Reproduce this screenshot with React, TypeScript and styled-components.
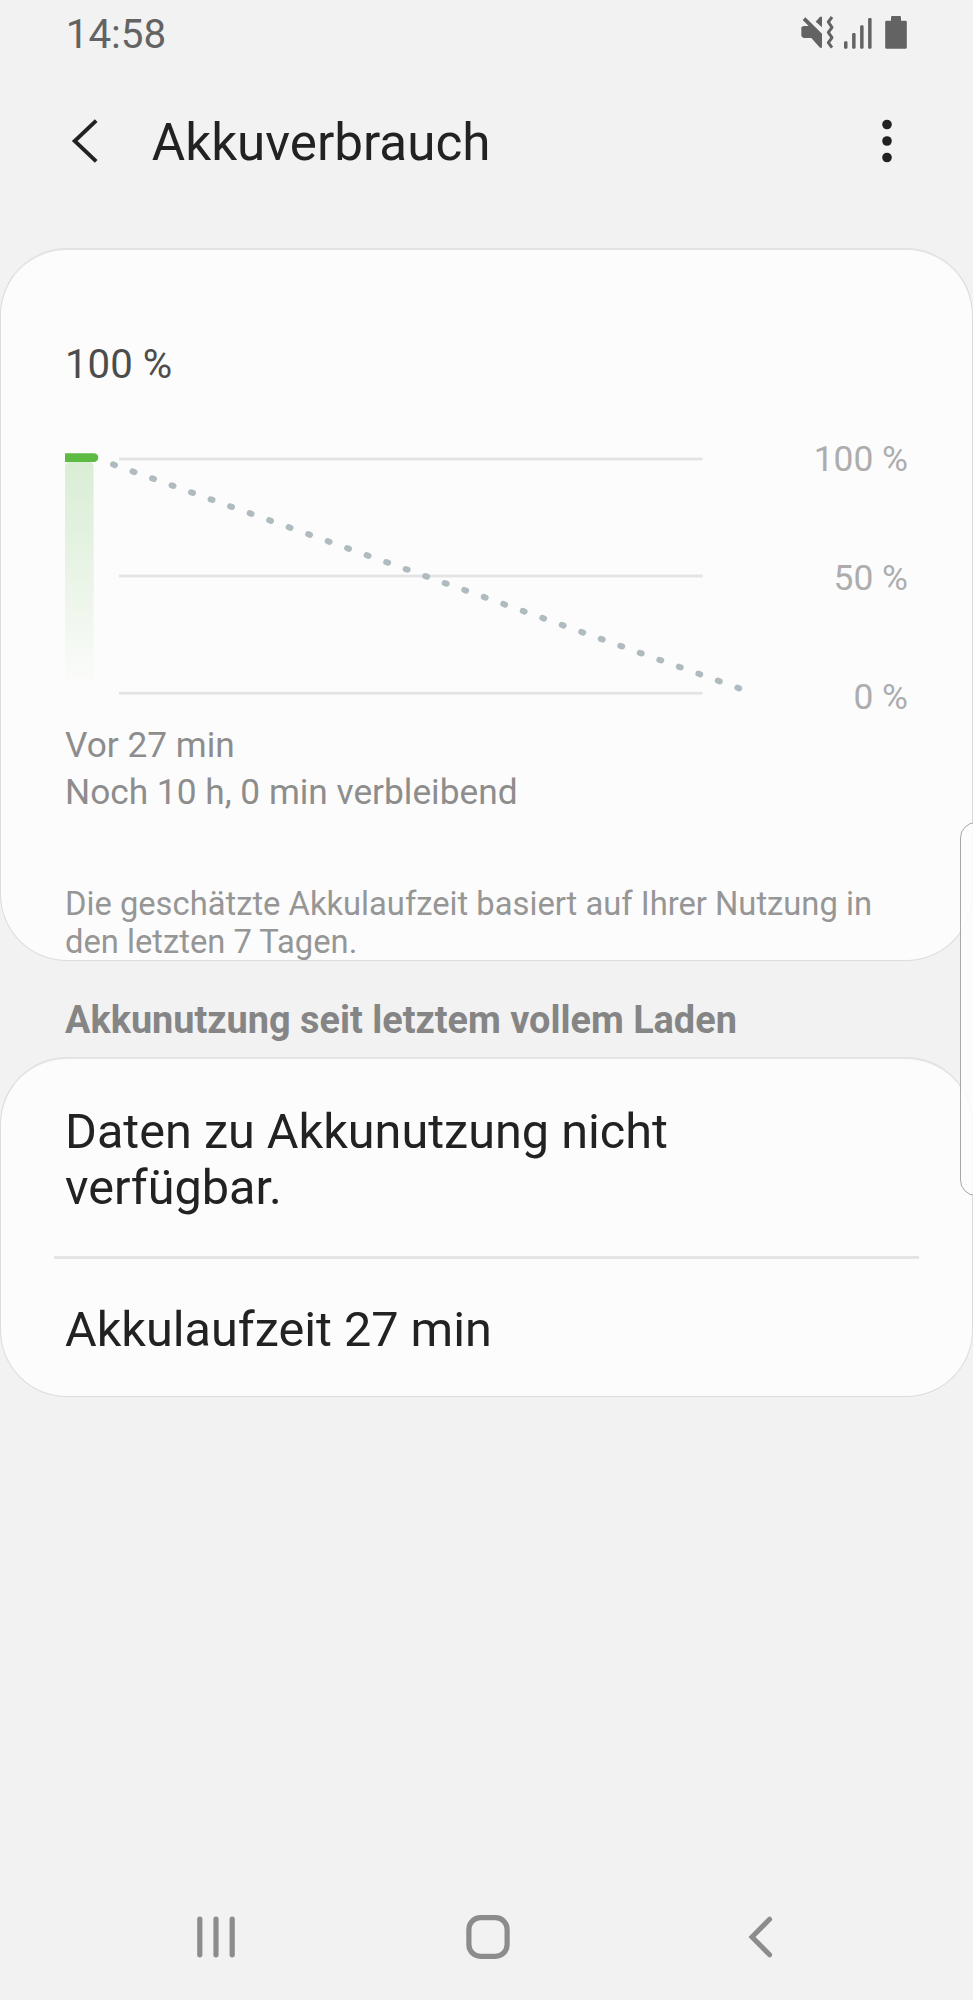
import React from "react";
import styled, { createGlobalStyle } from "styled-components";

const GlobalStyle = createGlobalStyle`
  *, *::before, *::after { box-sizing: border-box; }
  html, body { margin: 0; padding: 0; background: #f2f2f2; }
  body { overflow: hidden; }
  svg { display: block; flex: none; }
`;

const Screen = styled.div`
  position: relative;
  display: flex;
  flex-direction: column;
  width: 973px;
  height: 2000px;
  overflow: hidden;
  background: #f2f2f2;
  color: #222;
  font-family: Roboto, "Liberation Sans", sans-serif;
`;

const StatusBar = styled.div`
  display: flex;
  justify-content: space-between;
  height: 68px;
  padding: 0 65.7px;
  color: #636363;
`;

const Clock = styled.span`
  font-size: 40.4px;
  line-height: 69px;
`;

const StatusIcons = styled.div`
  display: flex;
  padding-top: 16px;
`;

const SignalSlot = styled.div`
  margin: 0 13.4px 0 10.3px;
`;

const TopBar = styled.header`
  display: flex;
  align-items: center;
  height: 149px;
  margin-bottom: 31px;
  padding: 0 80.5px 0 70px;
`;

const IconButton = styled.button`
  display: flex;
  padding: 0;
  border: 0;
  background: none;
  color: inherit;
`;

const BackButton = styled(IconButton)`
  margin-bottom: 4px;
`;

const MenuButton = styled(IconButton)`
  margin: 0 0 4px auto;
`;

const Title = styled.h1`
  margin: 0 0 0 51.8px;
  font-size: 51.2px;
  font-weight: 400;
  line-height: 60px;
`;

const Card = styled.section<{ $height: number }>`
  flex: none;
  height: ${(p) => p.$height}px;
  border: 1px solid #dcdcdc;
  border-top: 2px solid #e3e3e3;
  border-radius: 67px;
  background: #fcfcfc;
`;

const ChartCard = styled(Card)`
  padding: 90px 64px 0;
`;

const Level = styled.div`
  color: #4c4c4c;
  font-size: 40.2px;
  line-height: 50px;
`;

const ChartRow = styled.div`
  display: flex;
  justify-content: space-between;
  height: 280px;
  margin-top: 48px;
`;

const AxisLabels = styled.div`
  display: flex;
  flex-direction: column;
  justify-content: space-between;
  align-items: flex-end;
  color: #adadad;
  font-size: 35.4px;
  line-height: 42px;
`;

const Estimate = styled.div`
  margin-top: 3.5px;
  color: #8d8d8d;
  font-size: 35.25px;
  line-height: 47.5px;
`;

const Note = styled.p`
  margin: 68px 0 0;
  color: #969696;
  font-size: 32.72px;
  line-height: 38px;
  white-space: nowrap;
`;

const SectionTitle = styled.h2`
  flex: none;
  height: 96px;
  margin: 0;
  padding: 37px 65px 0;
  color: #858585;
  font-size: 37.86px;
  font-weight: 700;
  line-height: 44px;
`;

const UsageCard = styled(Card)`
  padding: 44.5px 53px 0;
`;

const UsageRow = styled.div`
  padding: 0 11px;
  font-size: 48.6px;
  line-height: 56.5px;
`;

const Divider = styled.div`
  height: 3px;
  margin: 39.5px 0 42.5px;
  background: #e4e4e4;
`;

const NavBar = styled.nav`
  display: grid;
  grid-template-columns: repeat(3, 272px);
  justify-content: center;
  align-items: center;
  justify-items: center;
  height: 126px;
  margin-top: auto;
  padding-left: 3px;
  color: #8c8c8c;
`;

const EdgeHandle = styled.div`
  position: absolute;
  top: 822px;
  right: -19px;
  width: 32px;
  height: 374px;
  border: 1.5px solid #a8a8a8;
  border-radius: 16px;
  background: rgba(253, 253, 253, 0.88);
`;

const MutedVibrateIcon = () => (
  <svg width="33" height="33" viewBox="64 48 99 99">
    <path
      fill="currentColor"
      d="M74 78H87L69 60L77 52L127 101V143H121L95 114H71L65 108V84Q65 78 74 78ZM108 65L121 50H127V82Z"
    />
    <path
      d="M157 51L146 66L157 82L146 97L157 113L146 128L157 143"
      fill="none"
      stroke="currentColor"
      strokeWidth="9"
      strokeLinejoin="round"
    />
  </svg>
);

const SignalIcon = () => (
  <svg width="28" height="33" viewBox="0 0 28 33" fill="currentColor">
    <rect x="0" y="25.3" width="3.5" height="7.5" rx="1.2" />
    <rect x="8.1" y="17" width="3.5" height="15.8" rx="1.2" />
    <rect x="16.1" y="9.2" width="3.5" height="23.6" rx="1.2" />
    <rect x="24.1" y="2" width="3.5" height="30.8" rx="1.2" />
  </svg>
);

const BatteryIcon = () => (
  <svg width="22" height="33" viewBox="0 0 22 33" fill="currentColor">
    <rect x="0.2" y="4.8" width="21.6" height="28" rx="1.4" />
    <rect x="6" y="0" width="10" height="8" rx="1.2" />
  </svg>
);

const BackIcon = () => (
  <svg width="30" height="46" viewBox="0 0 30 46">
    <path d="M26.2 2.6L4.7 23L26.2 43.4" fill="none" stroke="currentColor" strokeWidth="3.9" />
  </svg>
);

const MoreIcon = () => (
  <svg width="12" height="46" viewBox="0 0 12 46" fill="currentColor">
    <circle cx="6" cy="6.5" r="4.8" />
    <circle cx="6" cy="23" r="4.8" />
    <circle cx="6" cy="39.5" r="4.8" />
  </svg>
);

const RecentsIcon = () => (
  <svg width="40" height="44" viewBox="0 0 40 44" stroke="currentColor" strokeWidth="5.2" strokeLinecap="round">
    <path d="M3.8 4.2V39.8M20 4.2V39.8M36.2 4.2V39.8" />
  </svg>
);

const HomeIcon = () => (
  <svg width="44" height="44" viewBox="0 0 44 44">
    <rect x="2.9" y="2.7" width="38.2" height="38.6" rx="11.5" fill="none" stroke="currentColor" strokeWidth="5.2" />
  </svg>
);

const NavBackIcon = () => (
  <svg width="26" height="44" viewBox="0 0 26 44">
    <path
      d="M22.6 4.2L5 22L22.6 39.8"
      fill="none"
      stroke="currentColor"
      strokeWidth="5"
      strokeLinecap="round"
    />
  </svg>
);

const BatteryChart = () => (
  <svg width="690" height="280" viewBox="0 0 690 280">
    <defs>
      <linearGradient id="charge" x1="0" y1="0" x2="0" y2="1">
        <stop offset="0" stopColor="#5dbb46" stopOpacity="0.22" />
        <stop offset="0.5" stopColor="#5dbb46" stopOpacity="0.12" />
        <stop offset="1" stopColor="#5dbb46" stopOpacity="0.01" />
      </linearGradient>
    </defs>
    <g fill="#e3e3e3">
      <rect x="54" y="19.6" width="583.6" height="2.8" />
      <rect x="54" y="136.6" width="583.6" height="2.8" />
      <rect x="54" y="253.8" width="583.6" height="2.8" />
    </g>
    <path d="M0 30Q0 24 4 24H25Q28.6 24 28.6 30V243H0Z" fill="url(#charge)" />
    <path d="M0 15.3H29A4.3 4.3 0 0 1 29 23.9H0Z" fill="#5dbb43" />
    <path
      d="M48.1 26.4L675.5 250.8"
      fill="none"
      stroke="#b0bbc0"
      strokeWidth="6.1"
      strokeLinecap="round"
      strokeDasharray="1.9 18.82"
    />
  </svg>
);

export default function App() {
  return (
    <Screen>
      <GlobalStyle />
      <StatusBar>
        <Clock>14:58</Clock>
        <StatusIcons>
          <MutedVibrateIcon />
          <SignalSlot>
            <SignalIcon />
          </SignalSlot>
          <BatteryIcon />
        </StatusIcons>
      </StatusBar>
      <TopBar>
        <BackButton aria-label="Zurück">
          <BackIcon />
        </BackButton>
        <Title>Akkuverbrauch</Title>
        <MenuButton aria-label="Weitere Optionen">
          <MoreIcon />
        </MenuButton>
      </TopBar>
      <ChartCard $height={713}>
        <Level>100 %</Level>
        <ChartRow>
          <BatteryChart />
          <AxisLabels>
            <span>100 %</span>
            <span>50 %</span>
            <span>0 %</span>
          </AxisLabels>
        </ChartRow>
        <Estimate>
          Vor 27 min
          <br />
          Noch 10 h, 0 min verbleibend
        </Estimate>
        <Note>
          Die geschätzte Akkulaufzeit basiert auf Ihrer Nutzung in
          <br />
          den letzten 7 Tagen.
        </Note>
      </ChartCard>
      <SectionTitle>Akkunutzung seit letztem vollem Laden</SectionTitle>
      <UsageCard $height={340}>
        <UsageRow>
          Daten zu Akkunutzung nicht
          <br />
          verfügbar.
        </UsageRow>
        <Divider />
        <UsageRow>Akkulaufzeit 27 min</UsageRow>
      </UsageCard>
      <NavBar>
        <IconButton aria-label="Letzte Apps">
          <RecentsIcon />
        </IconButton>
        <IconButton aria-label="Startbildschirm">
          <HomeIcon />
        </IconButton>
        <IconButton aria-label="Zurück">
          <NavBackIcon />
        </IconButton>
      </NavBar>
      <EdgeHandle />
    </Screen>
  );
}
